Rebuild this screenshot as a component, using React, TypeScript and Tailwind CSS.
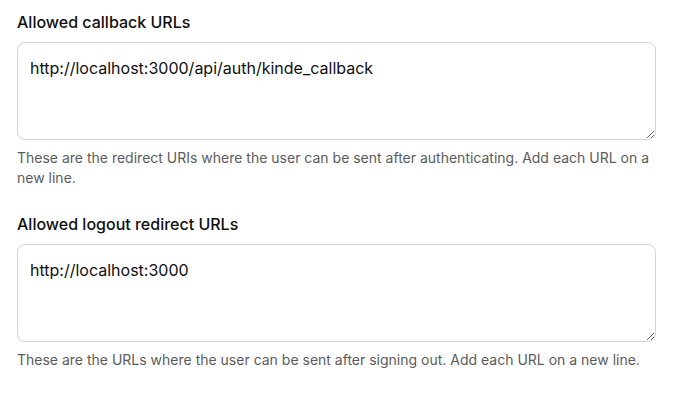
import React from 'react';

interface UrlFieldProps {
  id: string;
  label: string;
  value: string;
  help: string;
}

const UrlField: React.FC<UrlFieldProps> = ({ id, label, value, help }) => (
  <div className="flex flex-col">
    <label htmlFor={id} className="text-[16px] leading-[22px] font-medium text-[#0f0f0f] mb-[9px]">
      {label}
    </label>
    <textarea
      id={id}
      defaultValue={value}
      className="h-[98px] w-full resize-y rounded-[8px] border border-[#d4d4d4] bg-white px-[12px] py-[13px] text-[16px] leading-[24px] text-[#0f0f0f] outline-none"
    />
    <p className="mt-[8px] text-[14px] leading-[20px] text-[#5c5c5c]">{help}</p>
  </div>
);

const App: React.FC = () => {
  return (
    <div
      className="min-h-screen bg-white px-[17px] pt-[11px]"
      style={{ fontFamily: 'Inter, "Noto Sans", sans-serif' }}
    >
      <div className="flex w-[639px] flex-col gap-[25px]">
        <UrlField
          id="callback-urls"
          label="Allowed callback URLs"
          value="http://localhost:3000/api/auth/kinde_callback"
          help="These are the redirect URIs where the user can be sent after authenticating. Add each URL on a new line."
        />
        <UrlField
          id="logout-urls"
          label="Allowed logout redirect URLs"
          value="http://localhost:3000"
          help="These are the URLs where the user can be sent after signing out. Add each URL on a new line."
        />
      </div>
    </div>
  );
};

export default App;
